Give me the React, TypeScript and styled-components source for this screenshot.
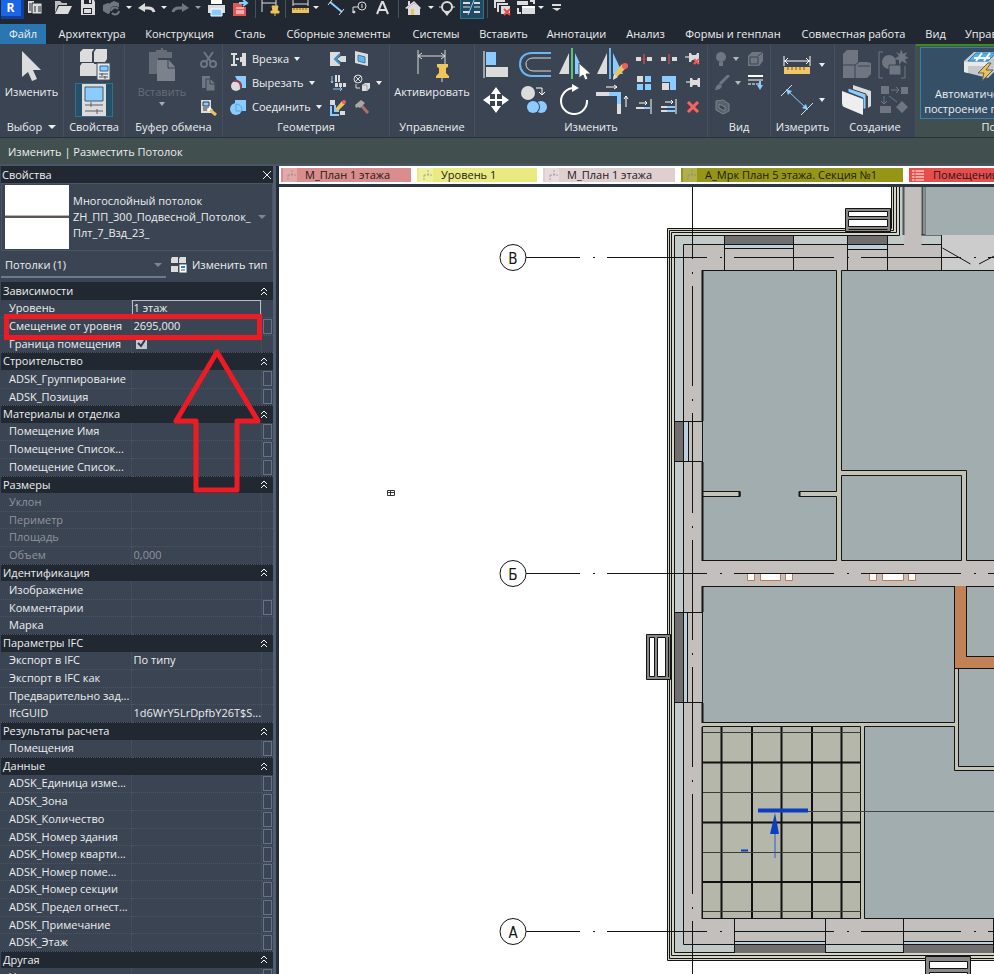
import React from "react";
import styled, { createGlobalStyle, css } from "styled-components";

const c = {
  dark: "#222831",
  ribbon: "#3b4453",
  context: "#414f4f",
  text: "#eceef0",
  muted: "#8f959e",
  line: "#4b5565",
  blue: "#8accff",
  grey: "#dcdcdc",
  off: "#6f7682",
  red: "#ed1c24",
};

const GlobalStyle = createGlobalStyle`
  *, *::before, *::after { box-sizing: border-box; }
  body { margin: 0; background: ${c.ribbon}; }
  button, input, select { font: inherit; color: inherit; }
  button { border: 0; padding: 0; background: none; white-space: nowrap; }
`;

const Page = styled.div`
  display: flex;
  flex-direction: column;
  height: 100vh;
  overflow: hidden;
  font: 11px/16px "Open Sans", "Noto Sans", sans-serif;
  color: ${c.text};
`;

/* ---------- shared pieces ---------- */

type IconProps = { w: number; h: number; children: React.ReactNode };
const Glyph = styled.svg`
  display: block;
  flex: none;
`;
const Icon = ({ w, h, children }: IconProps) => (
  <Glyph width={w} height={h} viewBox={`0 0 ${w} ${h}`} fill="none" aria-hidden="true">
    {children}
  </Glyph>
);
const Caret = ({ color = c.text }: { color?: string }) => (
  <Icon w={6} h={4}><path d="M0 0h6L3 4z" fill={color} /></Icon>
);
const WideCaret = ({ color = c.text }: { color?: string }) => (
  <Icon w={8} h={4}><path d="M0 0h8L4 4z" fill={color} /></Icon>
);

/* ---------- quick access bar ---------- */

const QuickBar = styled.div`
  display: flex;
  flex: none;
  height: 24px;
  background: ${c.dark};
`;
const QuickButton = styled.button<{ $w: number; $on?: boolean }>`
  flex: none;
  display: flex;
  justify-content: center;
  width: ${(p) => p.$w}px;
  height: 20px;
  ${(p) => p.$on && css`
    height: 19px;
    background: #1f4a60;
    border: 1px solid #2f7391;
    border-top: 0;
  `}
`;
const QuickSplit = styled.span<{ $w: number }>`
  flex: none;
  display: flex;
  justify-content: center;
  width: ${(p) => p.$w}px;
  &::before { content: ""; width: 1px; height: 18px; background: #4a515b; }
`;
const Logo = styled.span`
  width: 23px;
  height: 19px;
  background: #1b66e8;
  border-right: 3px solid #11419c;
  border-bottom: 3px solid #11419c;
  font-weight: 700;
  font-size: 12px;
  line-height: 16px;
  color: #fff;
`;

const DownMark = <path d="M1 6h6L4 9z" fill={c.text} />;
type QuickItem = { name: string; w: number; on?: boolean; art?: React.ReactNode; split?: boolean };
const quick: QuickItem[] = [
  { name: "Свойства", w: 23, art: <><path d="M4 1h6v12H4z" fill={c.grey} /><path d="M8 3h10v11H8z" fill={c.grey} stroke={c.dark} /><path d="M10 7h2M10 9h2M10 11h2M14 7h3M14 9h3M14 11h3" stroke={c.dark} /><path d="M5 4h2M5 6h2M5 8h2M5 10h2" stroke={c.dark} /></> },
  { name: "Открыть", w: 33, art: <><path d="M8 13V1h5l2 2h5v2H11z" fill="#bdbdbd" /><path d="M12 6h13l-4 8H8z" fill={c.grey} /></> },
  { name: "Сохранить", w: 16, art: <><path d="M1 0h13l1 2v13H1z" fill={c.grey} /><path d="M4 0h8v4H4zM3 8h9v6H3z" fill={c.dark} /><path d="M9 0h2v3H9zM4 9h7v4H4z" fill={c.grey} /></> },
  { name: "Синхронизировать", w: 29, art: <><path d="M7 5l5-2 5 2v6l-5 3-5-3zM14 3l4-2 5 2v4l-5 2-4-2z" fill={c.off} /><circle cx="19" cy="11" r="5" fill={c.dark} /><path d="M15 11a4 4 0 0 1 7-2m1 2a4 4 0 0 1-7 2" stroke={c.off} strokeWidth="2" /></> },
  { name: "Варианты синхронизации", w: 8, art: DownMark },
  { name: "Отменить", w: 27, art: <><path d="M5 8l7-5v9z" fill={c.grey} /><path d="M10 8h5q5 0 6 4" stroke={c.grey} strokeWidth="3" /></> },
  { name: "Список отмены", w: 7, art: DownMark },
  { name: "Повторить", w: 27, art: <><path d="M22 8l-7-5v9z" fill={c.off} /><path d="M17 8h-5q-5 0-6 4" stroke={c.off} strokeWidth="3" /></> },
  { name: "Список повторов", w: 9, art: <path d="M1 6h6L4 9z" fill="#9aa0a8" /> },
  { name: "Печать", w: 27, art: <><path d="M5 5h17v8H5z" fill={c.grey} /><path d="M8 0h11v4H8z" fill="#fff" /><path d="M8 9h11v7H8z" fill={c.blue} stroke="#fff" /></> },
  { name: "Экспорт в PDF", w: 21, art: <><path d="M3 3h9v4h4v9H3z" fill="#e0575a" /><path d="M6 8h8M6 11h8M6 13h8" stroke="#fff" /><path d="M9 3h7M13 0l4 3-4 3" stroke={c.blue} strokeWidth="2" /></> },
  { name: "", w: 8, split: true },
  { name: "Активировать размеры", w: 22, art: <><path d="M3 0v12M17 0v6M3 3h14" stroke={c.grey} /><path d="M13 6h6l-1 5h2v2h-8v-2h2zM16 13v3" fill="#ecc25a" stroke="#ecc25a" /></> },
  { name: "", w: 8, split: true },
  { name: "Измерить", w: 23, art: <><path d="M4 0v6M19 0v6M4 4h15" stroke={c.grey} /><path d="M3 8h17v5H3z" fill="#ecc25a" /><path d="M5 8v2M8 8v2M11 8v2M14 8v2M17 8v2" stroke="#806626" /></> },
  { name: "Варианты измерения", w: 10, art: DownMark },
  { name: "Параллельный размер", w: 29, art: <><path d="M8 2l12 10" stroke={c.blue} strokeWidth="2" /><path d="M17 15l5-6M6 5l4-5" stroke={c.grey} /></> },
  { name: "Марка", w: 17, art: <><circle cx="11" cy="6" r="4" stroke={c.grey} /><path d="M2 13V7h5M11 4v4" stroke={c.grey} /><circle cx="3" cy="12" r="1" fill={c.grey} stroke={c.grey} /></> },
  { name: "Текст", w: 29, art: <path d="M9 14L14 2h1l5 12M11 10h7" stroke={c.grey} strokeWidth="2" /> },
  { name: "", w: 3, split: true },
  { name: "3D вид", w: 27, art: <><path d="M5 8l9-7 7 7-1 1-6-6-7 6z" fill={c.grey} /><path d="M8 8l6-5 6 5v7H8z" fill={c.grey} /><path d="M11 9h3v6h-3z" fill="#ecc25a" /><path d="M8 1h2v4H8z" fill={c.grey} /></> },
  { name: "Варианты 3D вида", w: 7, art: DownMark },
  { name: "Разрез", w: 26, art: <><circle cx="13" cy="7" r="5" stroke={c.grey} strokeWidth="2" /><path d="M5 7h3M18 7h3" stroke={c.grey} /><path d="M10 12h6l-3 4z" fill={c.grey} /></> },
  { name: "Тонкие линии", w: 24, on: true, art: <><path d="M3 3h7M14 3h6M3 12h7M14 12h6" stroke={c.grey} strokeWidth="2" /><path d="M3 7h7M14 7h6" stroke={c.grey} /><path d="M8 15l6-15" stroke={c.blue} /></> },
  { name: "", w: 7, split: true },
  { name: "Закрыть неактивные", w: 23, art: <><path d="M3 1h11M4 0v8" stroke={c.grey} strokeWidth="2" /><path d="M6 4h11M7 4v8" stroke={c.grey} strokeWidth="2" /><path d="M10 6h9v8h-9z" fill={c.grey} /><path d="M13 9l6 6M19 9l-6 6" stroke="#f04848" strokeWidth="2" /></> },
  { name: "Переключить окна", w: 23, art: <><path d="M3 1h11v4H3zM8 6h13v8H8z" fill={c.grey} /><path d="M8 6h13v2H8z" fill="#fff" /><path d="M4 8v5h3M16 1h4v3" stroke={c.grey} strokeWidth="2" /></> },
  { name: "Список окон", w: 8, art: DownMark },
  { name: "Настройка панели", w: 23, art: <><path d="M7 5h9" stroke={c.grey} strokeWidth="2" /><path d="M7 8h9l-4 3z" fill={c.grey} /></> },
];

/* ---------- ribbon tabs ---------- */

const TabBar = styled.nav`
  flex: none;
  display: grid;
  grid-template-columns: 46px 92px 83px 58px 119px 76px 59px 87px 51px 124px 117px 47px 1fr;
  height: 20px;
  background: ${c.dark};
`;
const RibbonTab = styled.button<{ $file?: boolean }>`
  min-width: 0;
  line-height: 20px;
  ${(p) => p.$file && css`background: #2a76b0;`}
`;
const LastTab = styled(RibbonTab)`
  padding-left: 6px;
  text-align: left;
  overflow: hidden;
`;
const tabs = ["Файл", "Архитектура", "Конструкция", "Сталь", "Сборные элементы", "Системы", "Вставить", "Аннотации", "Анализ", "Формы и генплан", "Совместная работа", "Вид"];

/* ---------- ribbon ---------- */

const Ribbon = styled.div`
  flex: none;
  display: grid;
  grid-template-columns: 64px 61px 98px 167px 85px 233px 63px 64px 81px 3px 1fr;
  height: 93px;
  background: ${c.ribbon};
`;
const Panel = styled.section`
  display: flex;
  flex-direction: column;
  min-width: 0;
  padding-top: 3px;
  border-right: 1px solid #46505d;
`;
const PanelBody = styled.div<{ $gap?: number; $indent?: number }>`
  display: flex;
  justify-content: center;
  gap: ${(p) => p.$gap ?? 0}px;
  height: 72px;
  padding-left: ${(p) => p.$indent ?? 0}px;
`;
const PanelLabel = styled.div`
  display: flex;
  align-items: center;
  justify-content: center;
  gap: 6px;
  white-space: nowrap;
`;
const Big = styled.button<{ $off?: boolean }>`
  display: flex;
  flex-direction: column;
  align-items: center;
  align-self: flex-start;
  gap: 2px;
  ${(p) => p.$off && css`color: #646c79;`}
`;
const Stack = styled.div<{ $left?: boolean; $w?: number }>`
  display: grid;
  grid-auto-rows: 24px;
  justify-items: ${(p) => (p.$left ? "start" : "center")};
  align-content: start;
  ${(p) => p.$w && css`width: ${p.$w}px;`}
`;
const Tool = styled.button`
  display: flex;
  align-items: center;
  gap: 5px;
`;
const SplitTool = styled(Tool)`
  gap: 5px;
`;
const ToolGrid = styled.div<{ $cols: string; $row: number }>`
  display: grid;
  grid-template-columns: ${(p) => p.$cols};
  grid-auto-rows: ${(p) => p.$row}px;
  align-content: start;
  place-items: center;
`;
const PropsToggle = styled.button`
  display: flex;
  justify-content: center;
  width: 38px;
  height: 34px;
  background: #24506a;
  border: 1px solid #327090;
`;
const PropsColumn = styled.div`
  display: flex;
  flex-direction: column;
  align-items: center;
  gap: 2px;
`;
const Contextual = styled.section`
  min-width: 0;
  overflow: hidden;
  padding-top: 1px;
  background: ${c.context};
  border-top: 2px solid #3f8a12;
`;
const ContextWide = styled.div`
  width: 170px;
`;
const AutoButton = styled.button`
  display: flex;
  flex-direction: column;
  align-items: center;
  width: 118px;
  height: 72px;
  margin-left: 1px;
  padding-top: 2px;
  background: #354f66;
  border: 1px solid #3c7ea6;
`;
const AutoLine = styled.span`
  display: block;
  line-height: 15px;
`;
const GreenEdge = styled.div`
  background: ${c.context};
  border-top: 2px solid #3f8a12;
`;
const ContextBar = styled.div`
  flex: none;
  height: 29px;
  padding: 6px 8px;
  background: ${c.context};
  border-top: 1px solid #2b3138;
  border-bottom: 2px solid #4a5568;
`;

const scissors = <Icon w={17} h={17}><path d="M4 1l7 10M13 1L6 11" stroke={c.off} strokeWidth="2" /><circle cx="4" cy="13" r="3" stroke={c.off} strokeWidth="2" /><circle cx="13" cy="13" r="3" stroke={c.off} strokeWidth="2" /></Icon>;
const copyDoc = <Icon w={17} h={17}><path d="M2 1h8v12H2z" fill={c.off} /><path d="M6 4h5l4 4v8H6z" fill={c.off} stroke={c.ribbon} /><path d="M10 4v5h5" stroke={c.ribbon} /></Icon>;
const matchType = <Icon w={17} h={17}><path d="M1 1h10v13H1z" fill={c.grey} /><path d="M3 3h6v4H3z" fill={c.blue} stroke="#303844" /><path d="M3 9h6M3 11h4" stroke="#303844" /><path d="M7 10l3-2 3 3-3 3z" fill="#fff" /><path d="M10 11l6 5" stroke="#ecc25a" strokeWidth="3" /></Icon>;

const cope = <Icon w={17} h={15}><path d="M1 2h6M1 13h6M4 2v11" stroke={c.grey} strokeWidth="2" /><path d="M16 1v13h-4v-4h-2V5h2V1z" fill={c.grey} /><path d="M6 7h3" stroke={c.grey} strokeWidth="2" /></Icon>;
const cut = <Icon w={17} h={17}><path d="M5 1h11v12h-5z" fill={c.blue} /><circle cx="6" cy="11" r="6" fill={c.ribbon} /><circle cx="6" cy="11" r="5" fill={c.grey} /><path d="M4 6q7-1 7 7" stroke="#a33c45" strokeWidth="2" /></Icon>;
const join = <Icon w={17} h={17}><path d="M5 1h11v11H5z" fill={c.blue} /><circle cx="6" cy="10" r="6" fill={c.blue} /><path d="M6 5v7h6A6 6 0 0 0 6 5z" stroke="#4ca5e6" /></Icon>;
const geoA = <Icon w={18} h={16}><path d="M1 1h10v3L7 8l4 4v3H1z" fill={c.grey} /><path d="M17 5v6h-5L8 8l4-3z" fill={c.grey} /><path d="M11 3L6 8l5 5" stroke="#3b8fd0" strokeWidth="2" /></Icon>;
const geoB = <Icon w={16} h={16}><path d="M1 0l13 3v12L1 12z" fill={c.grey} /><path d="M4 4l7 2v6l-7-2z" fill="#65b6ef" stroke="#397fae" /></Icon>;
const geoC = <Icon w={17} h={18}><path d="M6 1v7M9 1v7" stroke={c.grey} strokeWidth="2" /><path d="M2 2v7M1 7l1 2 1-2" stroke={c.blue} /><path d="M5 11h11" stroke={c.grey} strokeWidth="4" strokeDasharray="3 1" /><path d="M3 15h9M10 13l2 2-2 2" stroke={c.blue} /></Icon>;
const geoD = <Icon w={18} h={18}><circle cx="5" cy="5" r="4" stroke={c.grey} /><path d="M2 2l6 6M8 2L2 8M3 10v4h4" stroke={c.grey} /><path d="M9 11l3-2h5v5l-3 3H9z" fill={c.grey} /><path d="M9 11h5v6" stroke="#9da1a7" /></Icon>;
const geoE = <Icon w={18} h={17}><path d="M1 1h5v5H1zM11 12h5v4h-5z" fill={c.grey} /><path d="M2 7v9h8M6 6v6h4" stroke={c.blue} strokeWidth="2" /><path d="M7 9l6-7 3 3-6 6-3 1z" fill="#ecc25a" /><circle cx="15" cy="3" r="2" fill="#f15c5c" /></Icon>;
const hammer = <Icon w={16} h={16}><path d="M7 6l7 8" stroke="#a9726b" strokeWidth="3" /><path d="M1 6l6-5 4 3-5 5-2-1-2 1z" fill="#a7a7a7" /></Icon>;

const split = <Icon w={16} h={10}><path d="M0 3h5v4H0zM11 3h5v4h-5z" fill={c.grey} /><path d="M8 0v10" stroke="#f15c5c" /><path d="M5 5h6" stroke="#bc3f49" /></Icon>;
const gapSplit = <Icon w={16} h={10}><path d="M0 3h5v4H0zM11 3h5v4h-5z" fill={c.grey} /><path d="M8 0v10" stroke="#f15c5c" /></Icon>;
const pin = <><path d="M0 5h4" stroke="#fff" /><path d="M4 1h2l1 2h4l1-2h2v9h-2l-1-2H7l-1 2H4z" fill={c.grey} /></>;
const unpin = <Icon w={16} h={14}>{pin}<path d="M9 7l5 5M14 7l-5 5" stroke="#f15c5c" strokeWidth="2" /></Icon>;
const pinIcon = <Icon w={15} h={12}>{pin}</Icon>;
const arrayIcon = <Icon w={14} h={14}><path d="M0 0h6v6H0z" fill={c.grey} /><path d="M8 0h6v6H8zM0 8h6v6H0zM8 8h6v6H8z" fill={c.blue} /></Icon>;
const scaleIcon = <Icon w={14} h={14}><path d="M0 0h14v14H8V6H0z" fill={c.blue} /><path d="M0 7h7v7H0z" fill={c.grey} /></Icon>;
const trimOne = <Icon w={16} h={16}><path d="M0 9h8" stroke={c.grey} strokeWidth="2" /><path d="M8 9h6" stroke={c.blue} strokeWidth="2" /><path d="M15 0v15M3 4h8M9 2l2 2-2 2" stroke="#fff" /></Icon>;
const trimMany = <Icon w={16} h={16}><path d="M0 8h6M0 12h6" stroke={c.grey} strokeWidth="2" /><path d="M6 8h8M6 12h8" stroke={c.blue} strokeWidth="2" /><path d="M15 0v15M4 3h8M10 1l2 2-2 2" stroke="#fff" /></Icon>;
const removeIcon = <Icon w={14} h={14}><path d="M2 2l10 10M12 2L2 12" stroke="#ff625f" strokeWidth="3" /></Icon>;

const bigAlign = <Icon w={28} h={30}><path d="M2 1v27" stroke="#fff" /><path d="M4 2h10v13H4z" fill={c.blue} /><path d="M4 17h22v10H4z" fill={c.grey} /></Icon>;
const bigOffset = <Icon w={34} h={28}><path d="M33 2H14C6 2 2 7 2 13s4 12 12 12h19" stroke="#69b7f2" strokeWidth="2" /><path d="M33 7H16c-5 0-8 2-8 6s3 7 8 7h17" stroke={c.grey} /></Icon>;
const bigMirror = <Icon w={32} h={34}><path d="M11 5v21H1z" fill={c.grey} /><path d="M17 5v21h10z" fill={c.blue} /><path d="M14 0v31" stroke="#57c474" strokeWidth="2" /><path d="M21 15v15l4-3 2 5 3-1-2-5h5z" fill="#fff" stroke="#434c59" /></Icon>;
const bigMirrorAxis = <Icon w={32} h={34}><path d="M11 5v21H1z" fill={c.grey} /><path d="M17 5v21h10z" fill={c.blue} /><path d="M14 0v31" stroke="#69b7f2" strokeWidth="2" /><path d="M18 26l8-10 4 4-8 8-5 3z" fill="#ecc25a" /><path d="M18 26l4 3-5 3z" fill={c.grey} /><circle cx="29" cy="18" r="3" fill="#f15c5c" /></Icon>;
const bigMove = <Icon w={28} h={28}><path d="M14 4v20M4 14h20" stroke="#fff" strokeWidth="2" /><path d="M14 1l5 7H9zM14 27l-5-7h10zM1 14l7-5v10zM27 14l-7-5v10z" fill="#fff" /></Icon>;
const bigCopy = <Icon w={32} h={30}><circle cx="9" cy="8" r="7" fill={c.grey} /><circle cx="22" cy="22" r="6" fill={c.blue} /><circle cx="14" cy="22" r="7" fill={c.ribbon} /><circle cx="14" cy="22" r="6" fill={c.blue} /><path d="M17 3h6v7M20 7l3 3 3-3" stroke="#fff" /></Icon>;
const bigRotate = <Icon w={32} h={32}><path d="M16 4A13 13 0 1 0 29 16" stroke="#fff" strokeWidth="2" /><path d="M14 0v8l7-4z" fill="#fff" /></Icon>;
const bigTrim = <Icon w={34} h={32}><path d="M1 10h13" stroke={c.grey} strokeWidth="4" /><path d="M14 8h12v12h-4v-8h-8z" fill={c.blue} /><path d="M22 20h4v10h-4z" fill={c.grey} /><path d="M11 3h11M19 1l3 2-3 2M31 23V12M29 15l2-3 2 3" stroke="#fff" /></Icon>;

const bulb = <Icon w={14} h={16}><circle cx="7" cy="6" r="5" fill={c.off} /><path d="M5 11h4v4H5z" fill={c.off} /></Icon>;
const brush = <Icon w={16} h={16}><path d="M15 0L6 9" stroke={c.off} strokeWidth="3" /><path d="M1 15q1-6 5-6l2 2q-1 4-7 4z" fill={c.off} /></Icon>;
const ghostBox = <Icon w={16} h={16}><path d="M2 2l7-1 6 4v7l-6 3-7-4z" fill="#59616d" stroke="#7b838e" /><path d="M5 5l6 3v4l-6-3z" fill={c.ribbon} stroke="#7b838e" /></Icon>;
const greyCube = <Icon w={18} h={16}><path d="M1 5l4-4h11v9l-4 5H1z" fill={c.off} /><path d="M3 6h8v7H3zM11 5l5-4" stroke={c.ribbon} /></Icon>;
const lineDown = <Icon w={18} h={16}><path d="M1 1h15" stroke="#fff" strokeWidth="2" /><path d="M1 5h15" stroke="#fff" /><path d="M1 9h12" stroke="#fff" strokeDasharray="3 1" /><path d="M13 6v5" stroke={c.blue} strokeWidth="2" /><path d="M10 10h6l-3 5z" fill={c.blue} /></Icon>;

const rulerBig = <Icon w={28} h={20}><path d="M1 1v10M27 1v10M1 6h26M5 3L2 6l3 3M23 3l3 3-3 3" stroke="#fff" /><path d="M1 12h26v7H1z" fill="#f0c668" /><path d="M5 12v3M9 12v3M13 12v3M17 12v3M21 12v3" stroke="#705b29" /></Icon>;
const dimBig = <Icon w={34} h={32}><path d="M1 12L12 1M21 31l12-12" stroke={c.grey} /><path d="M8 7l18 17" stroke={c.blue} /><path d="M6 5l2 6 4-4zM28 26l-6-2 4-4z" fill={c.blue} /></Icon>;

const familyIcon = <Icon w={30} h={32}><path d="M1 5l4-4h11v12h9l4 1v11l-4 4H1z" fill={c.off} /><path d="M1 16h12v13M13 16l4-3M16 17h12" stroke={c.ribbon} /></Icon>;
const groupIcon = <Icon w={34} h={32}><path d="M6 3H2v26h4M24 29h4V17" stroke={c.off} /><circle cx="12" cy="13" r="7" fill={c.off} /><path d="M12 16h12v10H12z" fill={c.off} stroke={c.ribbon} /><path d="M24 0l2 5 4-2-2 4 4 2-4 1 2 5-5-3-3 4v-5l-5-1 5-3-3-4 4 2z" fill={c.off} /></Icon>;
const partsIcon = <Icon w={32} h={32}><path d="M12 1l18 6v15l-3 2V12L12 6z" fill={c.grey} /><path d="M7 4l18 6v15h-3V14L7 8z" fill={c.blue} stroke={c.ribbon} /><path d="M1 7l21 8v16L3 23q-2-1-2-4z" fill="#eee" /></Icon>;
const flowIcon = <Icon w={32} h={32}><path d="M3 2h8v8H3zM23 3h7v7h-7zM2 22h11v7H2zM24 17l6 6-6 6-6-6z" fill={c.off} /><path d="M13 6h8M18 3l3 3-3 3M6 12v8M3 17l3 3 3-3M11 12l8 6" stroke={c.off} /></Icon>;
const autoCeiling = <><path d="M3 11L13 2h22v18l-8 8-24-6z" fill="#c6c9cb" /><path d="M7 11l8-8h20l-8 8z" fill="#51b0ef" stroke="#2e82b8" /><path d="M13 8h16M15 11l6-8M23 11l6-8" stroke="#fff" strokeWidth="2" /><path d="M3 12h24v4H7v7l-4-1z" fill="#e8e8e8" /><path d="M27 13L17 23h6l-2 8 11-11h-7l5-7z" fill="#f4c04c" stroke="#59626c" /></>;

/* ---------- workspace ---------- */

const Workspace = styled.div`
  flex: 1;
  min-height: 0;
  display: grid;
  grid-template-columns: 279px 1fr;
`;
const Palette = styled.aside`
  position: relative;
  min-width: 0;
  min-height: 0;
  overflow: hidden;
  background: ${c.ribbon};
  border-right: 3px solid #252d38;
`;
const PaletteInner = styled.div`
  height: 100%;
  overflow: hidden;
  padding-left: 1px;
  border-right: 3px solid #515d70;
`;
const PaletteTitle = styled.header`
  display: flex;
  align-items: center;
  justify-content: space-between;
  height: 17px;
  padding: 0 1px;
  line-height: 15px;
  background: ${c.dark};
`;
const TypeBox = styled.button`
  display: flex;
  align-items: center;
  width: 100%;
  height: 68px;
  padding: 0 6px 0 3px;
  border: 1px solid ${c.line};
  gap: 4px;
  text-align: left;
`;
const TypeName = styled.span`
  flex: 1;
`;
const Preview = styled.span`
  flex: none;
  width: 64px;
  height: 64px;
  background: linear-gradient(#fff 30px, #b5b5b5 30px, #b5b5b5 31px, #5c5552 31px, #5c5552 33px, #fff 33px);
`;
const FilterRow = styled.div`
  display: flex;
  align-items: flex-start;
  gap: 5px;
  height: 31px;
  padding-top: 3px;
`;
const FilterField = styled.label`
  display: flex;
  align-items: center;
  width: 165px;
  height: 24px;
  padding-right: 4px;
  border-bottom: 2px solid #6c7a91;
`;
const FilterSelect = styled.select`
  flex: 1;
  min-width: 0;
  appearance: none;
  padding: 0 0 0 4px;
  background: transparent;
  border: 0;
  outline: 0;
`;
const EditType = styled(Tool)`
  height: 22px;
`;
const Parameters = styled.table`
  width: 100%;
  table-layout: fixed;
  border-collapse: collapse;
  line-height: 16px;
  tr { height: 18px; }
  tr:nth-child(5n + 2), tr:nth-child(5n + 4) { height: 17px; }
`;
const GroupHead = styled.th`
  padding: 0 5px 0 2px;
  font-weight: 400;
  background: ${c.dark};
`;
const GroupButton = styled.button`
  display: flex;
  align-items: center;
  justify-content: space-between;
  width: 100%;
`;
const NameCell = styled.th<{ $off?: boolean }>`
  padding: 0 0 0 8px;
  white-space: nowrap;
  text-align: left;
  font-weight: 400;
  color: ${(p) => (p.$off ? c.muted : c.text)};
  border-bottom: 1px dotted ${c.line};
  border-right: 1px dotted ${c.line};
`;
const ValueCell = styled.td<{ $off?: boolean }>`
  padding: 0;
  color: ${(p) => (p.$off ? c.muted : c.text)};
  border-bottom: 1px dotted ${c.line};
  border-right: 1px dotted ${c.line};
`;
const ActionCell = styled.td`
  padding: 0 0 0 1px;
  border-bottom: 1px dotted ${c.line};
`;
const ValueInput = styled.input<{ $framed?: boolean }>`
  display: block;
  width: 100%;
  height: 16px;
  padding: 0 0 0 2px;
  background: transparent;
  border: 0;
  outline: 0;
  ${(p) => p.$framed && css`
    padding: 0 1px;
    border: 1px solid #b9bcc2;
  `}
`;
const Check = styled.input`
  appearance: none;
  display: block;
  width: 11px;
  height: 11px;
  margin: 0 0 0 4px;
  background: #c3c8cf url("data:image/svg+xml,%3Csvg xmlns='http://www.w3.org/2000/svg' viewBox='0 0 11 11'%3E%3Cpath d='M2 5l3 3 4-6' fill='none' stroke='%23303844' stroke-width='2'/%3E%3C/svg%3E");
`;
const LinkParam = styled.button`
  display: block;
  width: 9px;
  height: 15px;
  border: 1px solid #65738a;
`;
const Markup = styled.svg`
  position: absolute;
  left: 0;
  top: 0;
  pointer-events: none;
`;

type Param = { n: string; v?: string; link?: boolean; off?: boolean; check?: boolean; framed?: boolean };
const groups: { title: string; rows: Param[] }[] = [
  { title: "Зависимости", rows: [{ n: "Уровень", v: "1 этаж", framed: true }, { n: "Смещение от уровня", v: "2695,000", link: true }, { n: "Граница помещения", check: true }] },
  { title: "Строительство", rows: [{ n: "ADSK_Группирование", link: true }, { n: "ADSK_Позиция", link: true }] },
  { title: "Материалы и отделка", rows: [{ n: "Помещение Имя", link: true }, { n: "Помещение Список...", link: true }, { n: "Помещение Список...", link: true }] },
  { title: "Размеры", rows: [{ n: "Уклон", off: true }, { n: "Периметр", off: true }, { n: "Площадь", off: true }, { n: "Объем", v: "0,000", off: true }] },
  { title: "Идентификация", rows: [{ n: "Изображение" }, { n: "Комментарии", link: true }, { n: "Марка" }] },
  { title: "Параметры IFC", rows: [{ n: "Экспорт в IFC", v: "По типу" }, { n: "Экспорт в IFC как" }, { n: "Предварительно зад..." }, { n: "IfcGUID", v: "1d6WrY5LrDpfbY26T$S..." }] },
  { title: "Результаты расчета", rows: [{ n: "Помещения", link: true }] },
  { title: "Данные", rows: ["Единица изме...", "Зона", "Количество", "Номер здания", "Номер кварти...", "Номер поме...", "Номер секции", "Предел огнест...", "Примечание", "Этаж"].map((s) => ({ n: "ADSK_" + s, link: true })) },
  { title: "Другая", rows: [{ n: "Уровень", link: true }] },
];

/* ---------- drawing area ---------- */

const Views = styled.main`
  display: flex;
  flex-direction: column;
  min-width: 0;
  min-height: 0;
  background: #fff;
`;
const ViewTabs = styled.div`
  flex: none;
  display: flex;
  gap: 6px;
  height: 21px;
  padding: 2px 0 2px 2px;
  overflow: hidden;
  border-bottom: 3px solid #2c3542;
  color: #1a1a1a;
`;
const ViewTab = styled.button<{ $w: number; $bg: string }>`
  flex: none;
  display: flex;
  align-items: center;
  gap: 8px;
  width: ${(p) => p.$w}px;
  height: 14px;
  padding-left: 2px;
  line-height: 14px;
  background: ${(p) => p.$bg};
`;
const Canvas = styled.svg`
  display: block;
  flex: 1;
  min-height: 0;
  width: 100%;
`;
const views = [
  { name: "М_План 1 этажа", w: 130, bg: "#da8d8d" },
  { name: "Уровень 1", w: 120, bg: "#e9eb80" },
  { name: "М_План 1 этажа", w: 132, bg: "#dfcfcf" },
  { name: "А_Мрк План 5 этажа. Секция №1", w: 222, bg: "#969616" },
  { name: "Помещения", w: 120, bg: "#e74d4d" },
];
const PlanIcon = () => (
  <Icon w={14} h={14}>
    <path d="M0 0h14v14H0z" fill="#fff" opacity="0.25" />
    <path d="M5 7h8M9 2v5M5 7v6" stroke="#7f7f74" strokeDasharray="2 1" opacity="0.6" />
  </Icon>
);
const SheetIcon = () => (
  <Icon w={14} h={14}>
    <path d="M1 3h12M1 6h12M1 9h12M1 12h12" stroke="#f7a7a0" strokeWidth="2" />
    <path d="M4 2v11" stroke="#e74d4d" />
  </Icon>
);

const ink = "#141414";
const room = "#a2adaf";
const wall = "#c3bfbd";
const insul = "#c2cac9";
const thinWall = "#c3c4b6";

const Rooms = () => (
  <g fill={room} stroke={ink}>
    <path d="M702.5 270.5h134v221h-37v5h37v64h-134v-64h37.500v-5h-37.500z" />
    <path d="M841.500 270.500H1000v290h-33.500v-90h-125z" />
    <path d="M841.500 475.500h120v85h-120z" />
    <path d="M702.500 586.500h252v136h-252z" />
    <path d="M966.500 586.500H1000v70h-33.500zM958.500 668.500H1000v98h-41.500z" />
    <path d="M864.500 726.500h90v44H1000v148H864.500z" />
    <path d="M925.500 180H1000v55h-74.500z" stroke="none" />
  </g>
);

const AxisHead = ({ y, t }: { y: number; t: string }) => (
  <g>
    <circle cx="513" cy={y} r="13" fill="#fff" stroke={ink} />
    <text x="513" y={y + 6} textAnchor="middle" fontFamily="DejaVu Sans Condensed, DejaVu Sans, sans-serif" fontSize="15" fill={ink}>{t}</text>
    <path d={`M526 ${y}H1600`} stroke={ink} strokeDasharray="100 13 2 12" strokeDashoffset="46" />
  </g>
);

const Plan = () => (
  <Canvas viewBox="279 187 715 787" preserveAspectRatio="xMinYMin slice" fill="none" role="img" aria-label="План этажа">
    <path d="M667.500 228.500h224V180H1000v780.500H667.500z" fill="#d4d4c8" stroke={ink} />
    <path d="M669.500 230.500h224V180M669.500 230.500v728H1000M671.500 232.500h225V180M671.500 232.500v723H1000" stroke={ink} />
    <path d="M674.500 235.500h225V180H1000v772.500H674.500z" fill={insul} stroke={ink} />
    <path d="M683 244h221V180h18v64h78v700.500H683z" fill={wall} />
    <path d="M904 244.500H683.500v700H1000M921.500 244.500h20" stroke={ink} />
    <path d="M903.500 180v55M922.500 180v55M925.500 180v55" stroke="#4a5355" strokeWidth="2" />
    <path d="M942 235h58v35h-58z" fill="#ccc" />
    <path d="M941.500 270v-35h-20M942.500 248l28 16M979 264l21-11" stroke={ink} />

    <g fill="#706e6e">
      <path d="M725 236h68v8h-68zM848 236h40v8h-40zM675 422h8v40h-8zM675 612h8v90h-8zM734 945h91v8h-91zM904 945h90v8h-90z" />
    </g>
    <g fill="#bccfdb">
      <path d="M725 245h68v3h-68zM848 245h40v4h-40zM684 422h4v40h-4zM684 612h3v90h-3zM734 941h91v3h-91zM904 941h90v3h-90z" />
    </g>
    <g stroke={ink}>
      <path d="M724.500 270v-34.500M793.500 270v-34.500M724.500 248.500h69M724.500 244.500h69M847.500 270v-34.500M887.500 270v-34.500M847.500 249.500h40M847.500 244.500h40" />
      <path d="M675 421.500h27M675 461.500h27M683.500 421v41M688.500 421v41M675 612.500h27M675 702.500h27M683.500 612v91M687.500 612v91" />
      <path d="M734.500 919v34M825.500 919v34M734.500 941.500h91M734.500 944.500h91M903.500 919v34M993.500 919v34M903.500 941.500h90M903.500 944.500h90" />
    </g>

    <path d="M837 271h4v290h-4zM702 492h37v4h-37zM800 492h38v4h-38zM841 471h125v90h-4v-85H841zM702 723h253v4H702zM861 727h3v192h-3zM955 669h3v98h42v4h-45z" fill={thinWall} />
    <Rooms />
    <path d="M702.500 270v151M702.500 462v99M702.500 586v26M702.500 703v20M702.500 727v192" stroke={ink} strokeWidth="2" />
    <path d="M739.500 491.500v5M799.500 491.500v5" stroke={ink} strokeWidth="2" />
    <path d="M955 586h11v71h34v11h-45z" fill="#c28258" />
    <path d="M966.500 586v70.500H1000M1000 668.500h-45.500V586" stroke={ink} />

    <path d="M702.500 726.500h158v192h-158z" fill="#b5b7aa" stroke={ink} />
    <path d="M721.500 727v192M752 727v192M781.500 727v192M812 727v192M841.500 727v192M703 762.500h158M703 822.500h158M703 882h158" stroke="#101010" strokeWidth="2" />
    <path d="M703 732.500h158M703 792.500h158M703 852.500h158M703 911.500h158" stroke="#3b3c35" />

    <g fill="#fff" stroke="#cc7443">
      <path d="M747.500 573.500h7v7h-7zM760.500 573.500h20v7h-20zM785.500 573.500h7v7h-7zM869.500 573.500h7v7h-7zM882.500 573.500h21v7h-21zM908.500 573.500h7v7h-7z" />
    </g>

    <g stroke={ink}>
      <path d="M845.500 208.500h45v23h-45z" fill="#888" />
      <path d="M848.500 211.500h39v5h-39zM848.500 219.500h39v7h-39zM848.500 229.500h39" fill="#fff" />
      <path d="M646.500 634.500h24v45h-24z" fill="#888" />
      <path d="M649.500 637.500h5v39h-5zM657.500 637.500h8v39h-8zM668.500 637v40" fill="#fff" />
      <path d="M925.500 956.500h45v20h-45z" fill="#888" />
      <path d="M929.500 961.500h38v7h-38zM929.500 972.500h38v7h-38z" fill="#fff" />
    </g>
    <path d="M387.500 490.500h7v5h-7zM390.500 490v5M388 492.500h6" stroke="#333" />

    <AxisHead y={257.5} t="В" />
    <AxisHead y={573.5} t="Б" />
    <AxisHead y={931.5} t="А" />
    <path d="M692.500 187V1600" stroke={ink} strokeDasharray="100 13 2 12" strokeDashoffset="28" />

    <path d="M808 811.500h800" stroke="#3c4445" />
    <path d="M758 810.500h50" stroke="#0b3fc0" strokeWidth="4" />
    <path d="M741 850.500h7" stroke="#0b3fc0" strokeWidth="2" />
    <path d="M775 858v-40" stroke="#2f5cc4" strokeWidth="1" />
    <path d="M775 813l4 21h-9z" fill="#0b3fc0" />
  </Canvas>
);

export default function App() {
  return (
    <Page>
      <GlobalStyle />
      <QuickBar>
        <QuickButton $w={24} aria-label="Меню приложения"><Logo>R</Logo></QuickButton>
        {quick.map((q, i) =>
          q.split ? <QuickSplit key={i} $w={q.w} /> : (
            <QuickButton key={i} $w={q.w} $on={q.on} aria-label={q.name}><Icon w={q.w} h={20}>{q.art}</Icon></QuickButton>
          )
        )}
      </QuickBar>
      <TabBar>
        {tabs.map((t, i) => <RibbonTab key={t} $file={i === 0}>{t}</RibbonTab>)}
        <LastTab>Управление</LastTab>
      </TabBar>

      <Ribbon>
        <Panel>
          <PanelBody>
            <Big>
              <Icon w={22} h={35}><path d="M2 4v26l6-5 4 9 5-2-4-9h8z" fill={c.grey} /></Icon>
              Изменить
            </Big>
          </PanelBody>
          <PanelLabel>Выбор <WideCaret /></PanelLabel>
        </Panel>
        <Panel>
          <PanelBody>
            <PropsColumn>
              <Tool aria-label="Свойства типа">
                <Icon w={34} h={34}>
                  <path d="M3 5l3-3h11l-2 3v10H3zM17 5l2-3h11v10l-2 3H17zM3 19l2-3h12v13H3zM17 17h10v12H17z" fill={c.grey} />
                  <path d="M20 16h13v17H20z" fill="#e8e8e8" stroke="#49525f" />
                  <path d="M23 19h8v5h-8z" fill={c.blue} stroke="#2b6ca5" /><path d="M22 27h9M22 30h9M25 26v3M28 29v3" stroke="#4c545f" />
                </Icon>
              </Tool>
              <PropsToggle aria-label="Свойства">
                <Icon w={24} h={32}>
                  <path d="M0 0h24v32H0z" fill={c.grey} /><path d="M3 3h18v14H3z" fill={c.blue} stroke="#45596a" />
                  <path d="M3 21h18M3 27h18M9 18v5M15 25v5" stroke="#59616c" />
                </Icon>
              </PropsToggle>
            </PropsColumn>
          </PanelBody>
          <PanelLabel>Свойства</PanelLabel>
        </Panel>
        <Panel>
          <PanelBody $gap={14} $indent={8}>
            <Big $off>
              <Icon w={28} h={35}><path d="M1 5h7V3h5V1h2v2h4v2h5v6H10v16H1z" fill="#666d79" /><path d="M9 13h12l6 7v14H9z" fill="#7b828c" /><path d="M20 13v8h7" stroke={c.ribbon} /></Icon>
              Вставить
              <Caret color="#a8adb5" />
            </Big>
            <Stack>
              <Tool aria-label="Вырезать">{scissors}</Tool>
              <Tool aria-label="Копировать">{copyDoc}</Tool>
              <Tool aria-label="Копировать свойства типа">{matchType}</Tool>
            </Stack>
          </PanelBody>
          <PanelLabel>Буфер обмена</PanelLabel>
        </Panel>
        <Panel>
          <PanelBody $indent={2}>
            <Stack $left $w={96}>
              <SplitTool><Tool as="span">{cope}Врезка</Tool><Caret /></SplitTool>
              <SplitTool><Tool as="span">{cut}Вырезать</Tool><Caret /></SplitTool>
              <SplitTool><Tool as="span">{join}Соединить</Tool><Caret /></SplitTool>
            </Stack>
            <ToolGrid $cols="24px 24px 10px" $row={24}>
              <Tool aria-label="Сечение">{geoA}</Tool><Tool aria-label="Проем">{geoB}</Tool><span />
              <Tool aria-label="Стык балок">{geoC}</Tool><Tool aria-label="Разделить">{geoD}</Tool><Caret />
              <Tool aria-label="Соединение стен">{geoE}</Tool><Tool aria-label="Снос">{hammer}</Tool>
            </ToolGrid>
          </PanelBody>
          <PanelLabel>Геометрия</PanelLabel>
        </Panel>
        <Panel>
          <PanelBody>
            <Big>
              <Icon w={36} h={35}><path d="M4 3v24M31 3v14M4 9h27M8 6L4 9l4 3M27 6l4 3-4 3" stroke={c.grey} /><path d="M23 17h11v3l-2 1v5l3 3v2H22v-2l3-3v-5l-2-1z" fill="#f0c55c" /><path d="M28 31v4" stroke={c.grey} /></Icon>
              Активировать
            </Big>
          </PanelBody>
          <PanelLabel>Управление</PanelLabel>
        </Panel>
        <Panel>
          <PanelBody>
            <ToolGrid $cols="38px 39px 39px 38px" $row={35}>
              <Tool aria-label="Выровнять">{bigAlign}</Tool><Tool aria-label="Смещение">{bigOffset}</Tool>
              <Tool aria-label="Зеркало — выбрать ось">{bigMirror}</Tool><Tool aria-label="Зеркало — нарисовать ось">{bigMirrorAxis}</Tool>
              <Tool aria-label="Перенести">{bigMove}</Tool><Tool aria-label="Копировать">{bigCopy}</Tool>
              <Tool aria-label="Повернуть">{bigRotate}</Tool><Tool aria-label="Обрезать">{bigTrim}</Tool>
            </ToolGrid>
            <ToolGrid $cols="25px 25px 24px" $row={24}>
              <Tool aria-label="Разделить элемент">{split}</Tool><Tool aria-label="Разделить с зазором">{gapSplit}</Tool><Tool aria-label="Открепить">{unpin}</Tool>
              <Tool aria-label="Массив">{arrayIcon}</Tool><Tool aria-label="Масштаб">{scaleIcon}</Tool><Tool aria-label="Закрепить">{pinIcon}</Tool>
              <Tool aria-label="Удлинить элемент">{trimOne}</Tool><Tool aria-label="Удлинить элементы">{trimMany}</Tool><Tool aria-label="Удалить">{removeIcon}</Tool>
            </ToolGrid>
          </PanelBody>
          <PanelLabel>Изменить</PanelLabel>
        </Panel>
        <Panel>
          <PanelBody $gap={6}>
            <Stack $left $w={27}>
              <Tool aria-label="Скрыть">{bulb}<Caret color="#b4b8be" /></Tool>
              <Tool aria-label="Переопределить">{brush}<Caret color="#b4b8be" /></Tool>
              <Tool aria-label="Рамка">{ghostBox}</Tool>
            </Stack>
            <Stack>
              <Tool aria-label="Выбор рамкой">{greyCube}</Tool>
              <Tool aria-label="Линейный вид">{lineDown}</Tool>
            </Stack>
          </PanelBody>
          <PanelLabel>Вид</PanelLabel>
        </Panel>
        <Panel>
          <PanelBody>
            <ToolGrid $cols="38px 12px" $row={35}>
              <Tool aria-label="Измерить расстояние">{rulerBig}</Tool><Caret />
              <Tool aria-label="Размер">{dimBig}</Tool><Caret />
            </ToolGrid>
          </PanelBody>
          <PanelLabel>Измерить</PanelLabel>
        </Panel>
        <Panel>
          <PanelBody>
            <ToolGrid $cols="37px 37px" $row={35}>
              <Tool aria-label="Семейство">{familyIcon}</Tool><Tool aria-label="Группа">{groupIcon}</Tool>
              <Tool aria-label="Части">{partsIcon}</Tool><Tool aria-label="Сборка">{flowIcon}</Tool>
            </ToolGrid>
          </PanelBody>
          <PanelLabel>Создание</PanelLabel>
        </Panel>
        <GreenEdge />
        <Contextual>
          <ContextWide>
            <AutoButton>
              <Icon w={36} h={36}>{autoCeiling}</Icon>
              <AutoLine>Автоматическое</AutoLine>
              <AutoLine>построение потолка</AutoLine>
            </AutoButton>
            <PanelLabel>Потолок</PanelLabel>
          </ContextWide>
        </Contextual>
      </Ribbon>
      <ContextBar>Изменить | Разместить Потолок</ContextBar>

      <Workspace>
        <Palette>
          <PaletteInner>
            <PaletteTitle>
              Свойства
              <Tool aria-label="Закрыть"><Icon w={10} h={10}><path d="M1 1l8 8M9 1L1 9" stroke={c.text} /></Icon></Tool>
            </PaletteTitle>
            <TypeBox>
              <Preview />
              <TypeName>Многослойный потолок<br />ZH_ПП_300_Подвесной_Потолок_<br />Плт_7_Взд_23_</TypeName>
              <WideCaret color="#7a879b" />
            </TypeBox>
            <FilterRow>
              <FilterField>
                <FilterSelect aria-label="Категория"><option>Потолки (1)</option></FilterSelect>
                <WideCaret color="#7a879b" />
              </FilterField>
              <EditType>
                <Icon w={16} h={16}>
                  <path d="M0 2l1-2h6v6H0zM8 2l1-2h6v6H8zM0 9h7v6H0z" fill={c.grey} /><path d="M8 7h8v9H8z" fill="#fff" stroke="#4a5361" /><path d="M10 9h4v2h-4z" fill="#267fd0" /><path d="M10 13h4" stroke="#4a5361" />
                </Icon>
                Изменить тип
              </EditType>
            </FilterRow>
            <Parameters>
              <colgroup><col width="130" /><col width="130" /><col /></colgroup>
              <tbody>
                {groups.map((g) => (
                  <React.Fragment key={g.title}>
                    <tr>
                      <GroupHead colSpan={3}>
                        <GroupButton>{g.title}<Icon w={8} h={9}><path d="M1 4l3-3 3 3M1 8l3-3 3 3" stroke="#fff" strokeWidth="1" /></Icon></GroupButton>
                      </GroupHead>
                    </tr>
                    {g.rows.map((r, i) => (
                      <tr key={i}>
                        <NameCell scope="row" $off={r.off}>{r.n}</NameCell>
                        <ValueCell $off={r.off}>
                          {r.check ? <Check type="checkbox" defaultChecked aria-label={r.n} /> : <ValueInput aria-label={r.n} defaultValue={r.v ?? ""} $framed={r.framed} disabled={r.off} />}
                        </ValueCell>
                        <ActionCell>{r.link && <LinkParam aria-label={"Связать: " + r.n} />}</ActionCell>
                      </tr>
                    ))}
                  </React.Fragment>
                ))}
              </tbody>
            </Parameters>
          </PaletteInner>
          <Markup width="276" height="340" viewBox="0 0 276 340" fill="none" stroke={c.red} strokeWidth="5" aria-hidden="true">
            <path d="M6.500 150.500h253v21h-253z" />
            <path d="M217 186l-41 69h20v69h41v-69h21z" strokeLinejoin="round" />
          </Markup>
        </Palette>

        <Views>
          <ViewTabs>
            {views.map((v, i) => (
              <ViewTab key={i} $w={v.w} $bg={v.bg}>{i === 4 ? <SheetIcon /> : <PlanIcon />}{v.name}</ViewTab>
            ))}
          </ViewTabs>
          <Plan />
        </Views>
      </Workspace>
    </Page>
  );
}
